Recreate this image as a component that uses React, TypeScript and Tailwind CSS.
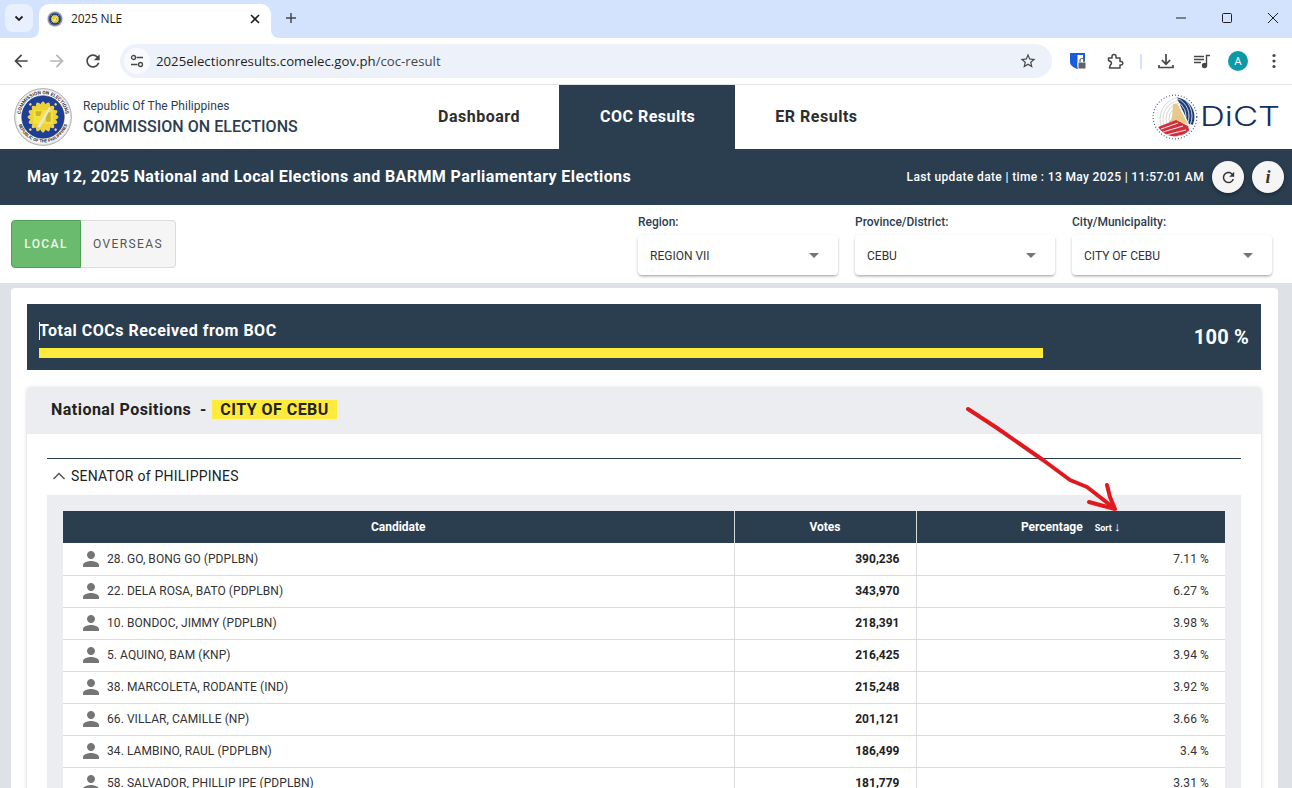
import React from "react";

const rows: [string, string, string][] = [
  ["28. GO, BONG GO (PDPLBN)", "390,236", "7.11 %"],
  ["22. DELA ROSA, BATO (PDPLBN)", "343,970", "6.27 %"],
  ["10. BONDOC, JIMMY (PDPLBN)", "218,391", "3.98 %"],
  ["5. AQUINO, BAM (KNP)", "216,425", "3.94 %"],
  ["38. MARCOLETA, RODANTE (IND)", "215,248", "3.92 %"],
  ["66. VILLAR, CAMILLE (NP)", "201,121", "3.66 %"],
  ["34. LAMBINO, RAUL (PDPLBN)", "186,499", "3.4 %"],
  ["58. SALVADOR, PHILLIP IPE (PDPLBN)", "181,779", "3.31 %"],
];

function Mat({ d, size = 20, className = "" }: { d: string; size?: number; className?: string }) {
  return (
    <svg width={size} height={size} viewBox="0 0 24 24" className={className} fill="currentColor">
      <path d={d} />
    </svg>
  );
}

const ARROW_BACK = "M20 11H7.83l5.59-5.59L12 4l-8 8 8 8 1.41-1.41L7.83 13H20v-2z";
const ARROW_FWD = "M12 4l-1.41 1.41L16.17 11H4v2h12.17l-5.58 5.59L12 20l8-8z";
const REFRESH =
  "M17.65 6.35C16.2 4.9 14.21 4 12 4c-4.42 0-7.99 3.58-7.99 8s3.57 8 7.99 8c3.73 0 6.84-2.55 7.73-6h-2.08c-.82 2.33-3.04 4-5.65 4-3.31 0-6-2.69-6-6s2.69-6 6-6c1.66 0 3.14.69 4.22 1.78L13 11h7V4l-2.35 2.35z";
const STAR =
  "M22 9.24l-7.19-.62L12 2 9.19 8.63 2 9.24l5.46 4.73L5.82 21 12 17.27 18.18 21l-1.63-7.03L22 9.24zM12 15.4l-3.76 2.27 1-4.28-3.32-2.88 4.38-.38L12 6.1l1.71 4.04 4.38.38-3.32 2.88 1 4.28L12 15.4z";
const PERSON =
  "M12 12c2.21 0 4-1.79 4-4s-1.79-4-4-4-4 1.79-4 4 1.79 4 4 4zm0 2c-2.67 0-8 1.34-8 4v2h16v-2c0-2.66-5.33-4-8-4z";

function Seal({ size }: { size: number }) {
  const rays = Array.from({ length: 16 }, (_, i) => i * 22.5);
  return (
    <svg width={size} height={size} viewBox="0 0 60 60">
      <defs>
        <path id="sealTop" d="M6.5 30a23.5 23.5 0 0 1 47 0" />
        <path id="sealBot" d="M3.6 30a26.4 26.4 0 0 0 52.8 0" />
      </defs>
      <circle cx="30" cy="30" r="29.4" fill="#e8e8e8" stroke="#9a9a9a" strokeWidth="0.8" />
      <circle cx="30" cy="30" r="27.5" fill={size > 30 ? "#fff" : "#8a8f9c"} />
      {size > 30 && (
        <>
          <text fontSize="5" fontWeight="700" fill="#2d3340" fontFamily="Roboto, sans-serif">
            <textPath href="#sealTop" startOffset="50%" textAnchor="middle">
              COMMISSION ON ELECTIONS
            </textPath>
          </text>
          <text fontSize="4.6" fontWeight="700" fill="#2d3340" fontFamily="Roboto, sans-serif">
            <textPath href="#sealBot" startOffset="50%" textAnchor="middle">
              REPUBLIC OF THE PHILIPPINES
            </textPath>
          </text>
        </>
      )}
      <circle cx="30" cy="30" r="22" fill="#1d3f9a" stroke="#2d3340" strokeWidth="0.6" />
      {rays.map((a) => (
        <path key={a} d="M30 30 L26.6 19 Q30 9 33.4 19 Z" fill="#eed23a" transform={`rotate(${a} 30 30)`} />
      ))}
      {[45, 135, 225, 315].map((a) => (
        <circle key={a} cx="30" cy="11.5" r="1.3" fill="#f5e267" transform={`rotate(${a} 30 30)`} />
      ))}
      <rect x="20" y="23" width="20" height="14" fill="#f4e33f" />
      <path d="M22 24h7l-2 5h-4zM33 25h5v10h-5z" fill="#c9b42c" />
      <path d="M24 40 L36 20 L38 21 L27 41 Z" fill="#e9e7cf" />
    </svg>
  );
}

function DictMark() {
  const arcsR = [6, 9, 12, 15, 18];
  return (
    <svg width="46" height="46" viewBox="0 0 46 46">
      <defs>
        <clipPath id="disc">
          <circle cx="23" cy="23" r="19.5" />
        </clipPath>
      </defs>
      <circle cx="23" cy="23" r="21.8" fill="none" stroke="#4a5a78" strokeWidth="1.2" strokeDasharray="1 2" />
      <g clipPath="url(#disc)">
        <rect width="46" height="46" fill="#fff" />
        {arcsR.map((r) => (
          <circle key={r} cx="30" cy="25" r={r + 4} fill="none" stroke="#c9c9c9" strokeWidth="0.8" />
        ))}
        <path d="M23 0 H46 V32 L37 30 Z" fill="#1d3c78" />
        {arcsR.map((r) => (
          <circle key={`w${r}`} cx="18" cy="22" r={r + 10} fill="none" stroke="#fff" strokeWidth="0.8" />
        ))}
        <path d="M21 10 Q25 8 27 13 L36 30 L28 29 L20 31 L12 35 L20 24 Z" fill="#e8c98c" />
        <path d="M6 33 L24 26 L36 32 L40 46 H6 Z" fill="#d12f3c" />
        <path d="M9 35 L26 29 M11 38 L31 32 M14 41 L34 36 M18 44 L36 40" stroke="#fff" strokeWidth="0.9" />
      </g>
    </svg>
  );
}

function Select({ label, value }: { label: string; value: string }) {
  return (
    <div className="w-[200px]">
      <div className="h-[15px] text-[12px] leading-[15px] font-medium text-[#2c3e50]">{label}</div>
      <div className="mt-[5px] flex h-10 items-center justify-between rounded bg-white pl-3 pr-[19px] text-[12px] text-[#333] shadow-[0_2px_3px_-1px_rgba(0,0,0,0.3),0_1px_3px_rgba(0,0,0,0.14)]">
        <span className="mt-[2px]">{value}</span>
        <span className="h-0 w-0 border-x-[5px] border-t-[5px] border-x-transparent border-t-[#757575]" />
      </div>
    </div>
  );
}

export default function App() {
  return (
    <div className="relative h-[788px] w-[1292px] overflow-hidden bg-[#dee2e6] font-['Roboto',sans-serif]">
      {/* Browser tab strip */}
      <div className="flex h-[38px] items-end bg-[#d3e3fd] pl-[5px] font-['Open_Sans',sans-serif]">
        <div className="mb-[6px] flex h-7 w-7 items-center justify-center rounded-lg bg-[#e8f0fe]">
          <svg width="12" height="12" viewBox="0 0 12 12" fill="none" stroke="#1f1f1f" strokeWidth="1.8">
            <path d="M2.5 4.5 6 8l3.5-3.5" />
          </svg>
        </div>
        <div className="relative ml-[6px] flex h-[34px] w-[232px] items-center rounded-t-[10px] bg-white pb-1 pl-2 pr-[10px]">
          <span className="absolute bottom-0 -left-2 h-2 w-2 bg-white">
            <span className="block h-2 w-2 rounded-br-lg bg-[#d3e3fd]" />
          </span>
          <span className="absolute bottom-0 -right-2 h-2 w-2 bg-white">
            <span className="block h-2 w-2 rounded-bl-lg bg-[#d3e3fd]" />
          </span>
          <Seal size={16} />
          <span className="ml-2 text-[12px] tracking-[-0.2px] text-[#1f1f1f]">2025 NLE</span>
          <svg className="ml-auto" width="12" height="12" viewBox="0 0 12 12" stroke="#1f1f1f" strokeWidth="1.6">
            <path d="M2 2l8 8M10 2l-8 8" />
          </svg>
        </div>
        <svg className="mb-[14px] ml-[14px]" width="12" height="12" viewBox="0 0 12 12" stroke="#444746" strokeWidth="1.5">
          <path d="M6 1v10M1 6h10" />
        </svg>
        <div className="mb-[14px] ml-auto flex items-center gap-[34px] pr-[13px]">
          <svg width="12" height="12" viewBox="0 0 12 12" stroke="#1f1f1f" strokeWidth="1">
            <path d="M1 6h10" />
          </svg>
          <svg width="12" height="12" viewBox="0 0 12 12" fill="none" stroke="#1f1f1f" strokeWidth="1">
            <rect x="1.5" y="1.5" width="9" height="9" rx="1" />
          </svg>
          <svg width="12" height="12" viewBox="0 0 12 12" stroke="#1f1f1f" strokeWidth="1">
            <path d="M1 1l10 10M11 1L1 11" />
          </svg>
        </div>
      </div>

      {/* Browser toolbar */}
      <div className="flex h-[47px] items-center border-b border-[#e3e3e3] bg-white font-['Open_Sans',sans-serif]">
        <div className="flex w-[120px] items-center gap-4 pl-[11px]">
          <Mat d={ARROW_BACK} className="text-[#474747]" />
          <Mat d={ARROW_FWD} className="text-[#b4b6b8]" />
          <Mat d={REFRESH} className="text-[#474747]" />
        </div>
        <div className="flex h-[34px] w-[932px] items-center rounded-full bg-[#edf2fa] pl-1 pr-[15px]">
          <div className="flex h-[26px] w-[26px] items-center justify-center rounded-full bg-[#f8fafd]">
            <svg width="14" height="14" viewBox="0 0 14 14" fill="none" stroke="#474747" strokeWidth="1.3">
              <circle cx="3.5" cy="3.5" r="2" />
              <path d="M6.5 3.5H13M1 10.5h6.5" />
              <circle cx="10.5" cy="10.5" r="2" />
            </svg>
          </div>
          <span className="ml-[6px] mt-[2px] text-[13.2px] tracking-[0.01px] text-[#1f1f1f]">
            2025electionresults.comelec.gov.ph<span className="text-[#474747]">/coc-result</span>
          </span>
          <Mat d={STAR} size={18} className="ml-auto text-[#474747]" />
        </div>
        <svg className="ml-[17px]" width="18" height="18" viewBox="0 0 18 18">
          <path d="M1 1h15v9c0 3-3 5.500-7.500 7C4 15.500 1 13 1 10z" fill="#175ddc" />
          <path d="M8.500 3H14v7c0 1.500-1.500 3-5.500 4.500z" fill="#fff" />
          <rect x="9" y="10" width="8" height="7" rx="1" fill="#5f6368" stroke="#fff" />
          <path d="M11 10V8.500a2 2 0 0 1 4 0V10" fill="none" stroke="#5f6368" strokeWidth="1.2" />
        </svg>
        <svg className="ml-[19px]" width="18" height="18" viewBox="0 0 18 18" fill="none" stroke="#444746" strokeWidth="1.5">
          <path d="M2.500 6H6V4.500a2 2 0 0 1 4 0V6h4v3.500h1a1.800 1.800 0 0 1 0 3.600h-1V16H3.500l.8-3a2 2 0 0 0 .2-3.500L2.500 8.500z" strokeLinejoin="round" />
        </svg>
        <div className="ml-[16px] h-[15px] w-[2px] bg-[#d3e3fd]" />
        <svg className="ml-[14px]" width="20" height="20" viewBox="0 0 20 20" fill="none" stroke="#444746" strokeWidth="1.7">
          <path d="M10 3v10M5.800 9 10 13.200 14.200 9M3 14v2.500h14V14" />
        </svg>
        <svg className="ml-[17px]" width="18" height="18" viewBox="0 0 18 18" fill="none" stroke="#444746" strokeWidth="1.4">
          <path d="M1 4.500h10M1 7.500h10M1 10.500h7M13.500 13V3.500H17" />
          <circle cx="11.500" cy="13.500" r="2" fill="#444746" />
        </svg>
        <div className="ml-[17px] flex h-5 w-5 items-center justify-center rounded-full bg-[#0d9aa6] text-[11px] text-white">A</div>
        <svg className="ml-[24px]" width="4" height="16" viewBox="0 0 4 16" fill="#444746">
          <circle cx="2" cy="2.500" r="1.600" />
          <circle cx="2" cy="8" r="1.600" />
          <circle cx="2" cy="13.500" r="1.600" />
        </svg>
      </div>

      {/* Site header */}
      <div className="flex h-[64px] items-stretch bg-white">
        <div className="flex w-[398px] items-center pl-[14px]">
          <Seal size={58} />
          <div className="ml-[11px] mt-[2px]">
            <div className="text-[12px] leading-[16px] tracking-[0.03px] text-[#2c3e50]">Republic Of The Philippines</div>
            <div className="mt-[2px] text-[16px] leading-[22px] font-medium tracking-[0.04px] text-[#2c3e50]">COMMISSION ON ELECTIONS</div>
          </div>
        </div>
        <div className="flex items-center pl-10 pr-[39px] text-[16px] font-bold tracking-[0.5px] text-[#2d2d2d]">Dashboard</div>
        <div className="flex items-center bg-[#2b3e50] pl-[41px] pr-10 text-[16px] font-bold tracking-[0.5px] text-white">COC Results</div>
        <div className="flex items-center px-10 text-[16px] font-bold tracking-[0.5px] text-[#2d2d2d]">ER Results</div>
        <div className="ml-auto flex items-center pr-[12px]">
          <DictMark />
          <svg width="82" height="36" viewBox="0 0 82 36">
            <text x="2" y="27" fontSize="27" fontWeight="300" fill="#14305f" fontFamily="Inter, sans-serif" textLength="80" lengthAdjust="spacingAndGlyphs">
              DiCT
            </text>
          </svg>
        </div>
      </div>

      {/* Title band */}
      <div className="flex h-[56px] items-center bg-[#2b3e50] pl-[27px] pr-2 text-white">
        <div className="text-[16px] font-bold tracking-[0.4px]">May 12, 2025 National and Local Elections and BARMM Parliamentary Elections</div>
        <div className="ml-auto text-[12px] font-medium tracking-[0.36px]">Last update date | time : 13 May 2025 | 11:57:01 AM</div>
        <div className="ml-2 flex h-8 w-8 items-center justify-center rounded-full bg-[#f5f5f5] text-[#333] shadow-[0_2px_4px_rgba(0,0,0,0.35)]">
          <Mat d={REFRESH} size={17} />
        </div>
        <div className="ml-2 flex h-8 w-8 items-center justify-center rounded-full bg-[#f5f5f5] font-['Liberation_Serif',serif] text-[18px] font-bold italic text-[#333] shadow-[0_2px_4px_rgba(0,0,0,0.35)]">
          i
        </div>
      </div>

      {/* Filters */}
      <div className="flex h-[78px] bg-white">
        <div className="ml-[11px] mt-[15px] flex h-12 self-start text-[12px] font-medium tracking-[1.4px]">
          <div className="flex w-[70px] items-center justify-center rounded-l border border-[#4f9f54] bg-[#6abb6e] text-[#f2f7ea]">LOCAL</div>
          <div className="flex w-[95px] items-center justify-center rounded-r border border-l-0 border-[#dcdcdc] bg-[#f5f5f5] font-normal text-[#555]">OVERSEAS</div>
        </div>
        <div className="ml-auto mr-5 mt-[10px] flex gap-[17px]">
          <Select label="Region:" value="REGION VII" />
          <Select label="Province/District:" value="CEBU" />
          <Select label="City/Municipality:" value="CITY OF CEBU" />
        </div>
      </div>

      {/* Main card */}
      <div className="ml-[11px] mt-[5px] h-[600px] w-[1267px] rounded-t bg-white p-4 pr-[17px]">
        <div className="relative flex h-[66px] items-center bg-[#2b3e50] text-white">
          <div className="ml-3 w-[1004px] self-start pt-[17px]">
            <div className="text-[16px] leading-5 font-bold tracking-[0.5px]">Total COCs Received from BOC</div>
            <div className="mt-[7px] h-[10px] bg-[#ffeb3b]" />
          </div>
          <div className="ml-auto pr-3 text-[20px] font-bold tracking-[0.2px]">100 %</div>
          <span className="absolute left-3 top-[18px] h-[18px] w-px bg-[#e8eef5]" />
        </div>

        <div className="mt-[17px] rounded-t bg-white shadow-[0_1px_4px_rgba(0,0,0,0.18)]">
          <div className="flex h-[47px] items-center rounded-t bg-[#ecedf1] pb-[2px] pl-6 text-[16px] font-bold tracking-[0.47px] text-[#222]">
            <span>National Positions</span>
            <span className="ml-[3px] w-[18px] text-center">-</span>
            <span className="bg-[#ffeb3b] px-2 leading-[19px]">CITY OF CEBU</span>
          </div>
          <div className="px-5 pt-6">
            <div className="border-t border-[#2b3e50]" />
            <div className="flex h-9 items-center pb-[2px] pl-[5px] text-[14px] text-[#222]">
              <svg width="14" height="14" viewBox="0 0 14 14" fill="none" stroke="#555" strokeWidth="1.5">
                <path d="M1.500 10 7 4.500 12.500 10" />
              </svg>
              <span className="ml-[5px] tracking-[0.24px]">SENATOR of PHILIPPINES</span>
            </div>
            <div className="bg-[#ecedf1] px-4 pb-4 pt-4">
              <table className="w-[1162px] table-fixed border-collapse bg-white text-[12px] text-[#333]">
                <colgroup>
                  <col className="w-[671px]" />
                  <col className="w-[182px]" />
                  <col className="w-[309px]" />
                </colgroup>
                <thead>
                  <tr className="h-8 bg-[#2b3e50] text-white">
                    <th className="border-r border-[#d8d8d8] font-bold">Candidate</th>
                    <th className="border-r border-[#d8d8d8] font-bold">Votes</th>
                    <th className="font-bold">
                      Percentage
                      <span className="ml-[12px] text-[9px]">
                        Sort <span className="text-[13px] font-normal">↓</span>
                      </span>
                    </th>
                  </tr>
                </thead>
                <tbody>
                  {rows.map(([name, votes, pct]) => (
                    <tr key={name} className="h-8 border-b border-[#dcdcdc]">
                      <td className="border-r border-[#dcdcdc] pl-4">
                        <div className="flex items-center">
                          <Mat d={PERSON} size={24} className="text-[#757575]" />
                          <span className="ml-1 tracking-[0.07px]">{name}</span>
                        </div>
                      </td>
                      <td className="border-r border-[#dcdcdc] pr-4 text-right font-bold text-[#222]">{votes}</td>
                      <td className="pr-4 text-right tracking-[0.1px]">{pct}</td>
                    </tr>
                  ))}
                </tbody>
              </table>
            </div>
          </div>
        </div>
      </div>

      {/* Hand-drawn annotation arrow */}
      <svg className="pointer-events-none absolute left-[960px] top-[400px]" width="170" height="120" viewBox="960 400 170 120" fill="none" stroke="#e0191f" strokeWidth="4" strokeLinecap="round" strokeLinejoin="round">
        <path d="M968 409 L997 428 L1043 460 L1070 480 L1087 487 L1114 508" />
        <path d="M1107 485 L1110 497 L1115 509 L1100 505 L1089 502" />
      </svg>
    </div>
  );
}
